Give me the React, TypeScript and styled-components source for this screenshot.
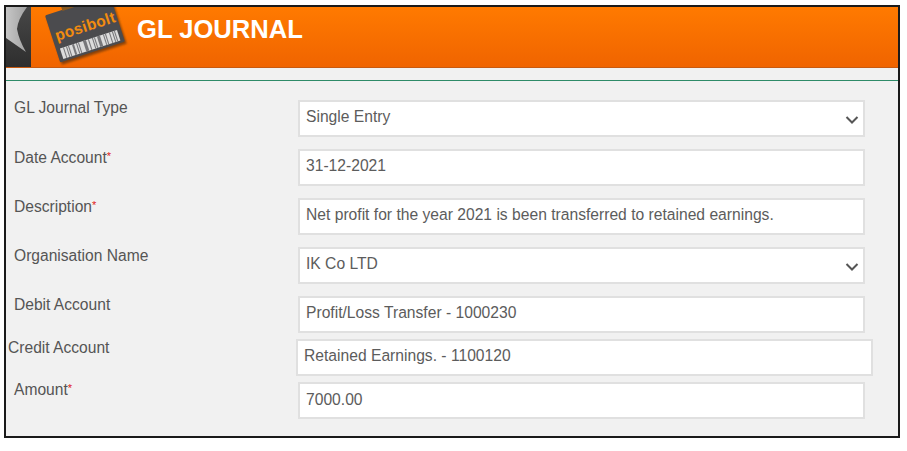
import React from "react";
import styled, { createGlobalStyle } from "styled-components";

const Global = createGlobalStyle`
  html, body { margin: 0; padding: 0; background: #fff; }
  body { font-family: "Liberation Sans", Arial, sans-serif; }
`;

const Frame = styled.div`
  box-sizing: border-box;
  width: 896px;
  height: 433px;
  margin: 5px 0 0 4px;
  border: 2px solid #1a1a1a;
  background: #f1f1f1;
  overflow: hidden;
`;

const Header = styled.header`
  display: flex;
  align-items: stretch;
  height: 61px;
  background: linear-gradient(#ff7a00, #f06400);
  border-bottom: 1px solid #c85a10;
  box-sizing: border-box;
`;

const BackTab = styled.div`
  width: 25px;
  flex: none;
  background: linear-gradient(#474747, #2e2e2e);
  display: flex;
`;

const LogoSlot = styled.div`
  width: 100px;
  flex: none;
  display: flex;
`;

const Title = styled.h1`
  margin: 7px 0 0 6px;
  font-size: 25.6px;
  line-height: 30px;
  font-weight: 700;
  color: #fff;
`;

const Rule = styled.hr`
  margin: 12px 0 0;
  border: 0;
  height: 1px;
  background: #2e8b68;
`;

const Form = styled.div`
  display: flex;
  flex-direction: column;
  padding-top: 19px;
`;

const Row = styled.div<{ $gap: number; $shift?: boolean }>`
  display: grid;
  grid-template-columns: ${(p) => (p.$shift ? "288px 577px" : "284px 567px")};
  padding-left: ${(p) => (p.$shift ? "2px" : "8px")};
  margin-top: ${(p) => p.$gap}px;
`;

const Label = styled.label<{ $drop?: boolean }>`
  font-size: 15.6px;
  line-height: 16px;
  color: #555;
  margin-top: ${(p) => (p.$drop ? 1 : 0)}px;
`;

const Star = styled.span`
  color: #e01818;
  font-size: 11px;
  line-height: 0;
  position: relative;
  top: -3px;
`;

const Field = styled.div<{ $last?: boolean }>`
  box-sizing: border-box;
  height: 37px;
  display: flex;
  align-items: center;
  justify-content: space-between;
  padding: 0 4px ${(p) => (p.$last ? 2 : 3)}px 6px;
  background: #fff;
  border: 2px solid #e0e0e0;
  font-size: 15.65px;
  color: #5c5c5c;
  white-space: nowrap;
`;

const Chevron = () => (
  <svg width="14" height="14" viewBox="0 0 14 14" fill="none" style={{ marginTop: 6 }}>
    <path d="M1.5 4 L7 9.5 L12.5 4" stroke="#555" strokeWidth="2" />
  </svg>
);

const Back = () => (
  <svg width="25" height="60" viewBox="0 0 25 60">
    <defs>
      <linearGradient id="bk" x1="0" x2="1" y1="0" y2="0">
        <stop offset="0" stopColor="#c6c6c6" />
        <stop offset="1" stopColor="#a2a2a2" />
      </linearGradient>
      <filter id="soft"><feGaussianBlur stdDeviation="0.6" /></filter>
    </defs>
    <path d="M0 0 H21 Q12 12 11 22 Q13 33 20 45 L0 31 Z" fill="url(#bk)" filter="url(#soft)" />
  </svg>
);

const bars = [3, 1, 2, 1, 1, 1, 3, 2, 2, 1, 1, 1, 4, 3, 2, 1, 3, 1, 1, 1, 2, 3, 3, 1, 1, 1, 3, 1, 2, 1, 1, 1];

const Logo = () => {
  let x = 0;
  return (
    <svg width="100" height="60" viewBox="31 7 100 60">
      <defs>
        <filter id="sh"><feGaussianBlur stdDeviation="1" /></filter>
      </defs>
      <g transform="translate(45 15.5) rotate(-18)">
        <rect x="1" y="2" width="68" height="50" fill="#5a3010" opacity="0.7" filter="url(#sh)" />
        <rect x="0" y="0" width="68" height="49.5" rx="1.5" fill="#4b4b4e" />
        <rect x="18" y="-4" width="12" height="5" fill="#8a5a20" />
        <text x="3.5" y="28" fontFamily="Liberation Sans, Arial, sans-serif" fontWeight="700" fontSize="15.5" fill="#f28c10" letterSpacing="0.3">posibolt</text>
        <rect x="4" y="36" width="60" height="11" fill="#dcdcdc" />
        {bars.map((w, i) => {
          const cur = x;
          x += w * 1.05;
          return i % 2 === 1 ? <rect key={i} x={4 + cur} y="36" width={w * 1.05} height="11" fill="#77777a" /> : null;
        })}
      </g>
    </svg>
  );
};

const Req = () => <Star>*</Star>;

export default function App() {
  return (
    <>
      <Global />
      <Frame>
        <Header>
          <BackTab><Back /></BackTab>
          <LogoSlot><Logo /></LogoSlot>
          <Title>GL JOURNAL</Title>
        </Header>
        <Rule />
        <Form>
          <Row $gap={0}>
            <Label>GL Journal Type</Label>
            <Field>Single Entry<Chevron /></Field>
          </Row>
          <Row $gap={12}>
            <Label $drop>Date Account<Req /></Label>
            <Field>31-12-2021</Field>
          </Row>
          <Row $gap={12}>
            <Label $drop>Description<Req /></Label>
            <Field>Net profit for the year 2021 is been transferred to retained earnings.</Field>
          </Row>
          <Row $gap={12}>
            <Label $drop>Organisation Name</Label>
            <Field>IK Co LTD<Chevron /></Field>
          </Row>
          <Row $gap={12}>
            <Label $drop>Debit Account</Label>
            <Field>Profit/Loss Transfer - 1000230</Field>
          </Row>
          <Row $gap={6} $shift>
            <Label $drop>Credit Account</Label>
            <Field>Retained Earnings. - 1100120</Field>
          </Row>
          <Row $gap={6}>
            <Label>Amount<Req /></Label>
            <Field $last>7000.00</Field>
          </Row>
        </Form>
      </Frame>
    </>
  );
}
